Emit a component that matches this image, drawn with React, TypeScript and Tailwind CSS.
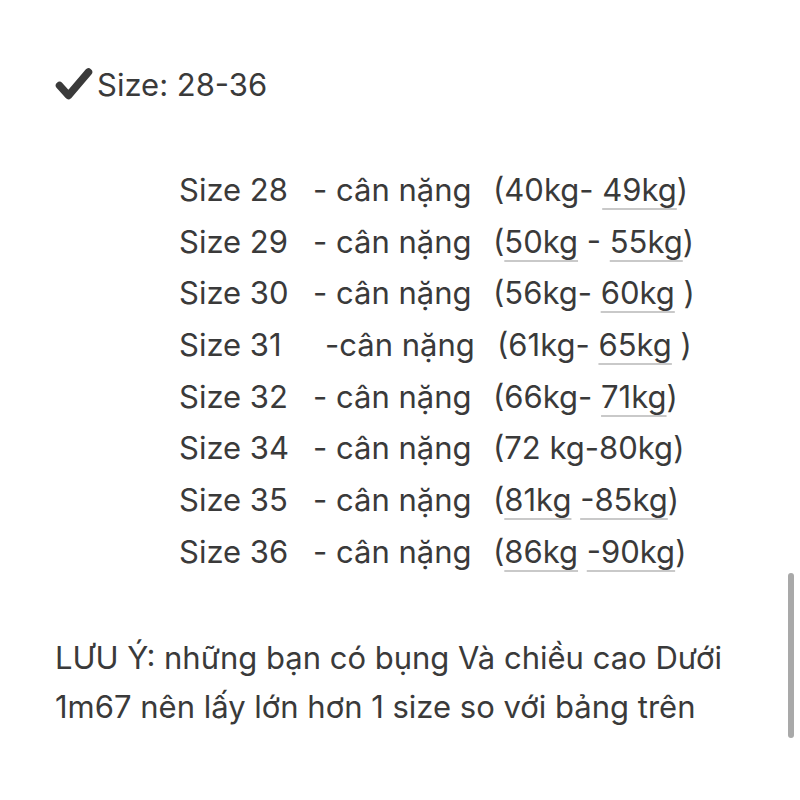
import React from 'react';

const rows: { size: string; dash: string; range: React.ReactNode; shift?: boolean }[] = [
  { size: 'Size 28', dash: '- cân nặng', range: <>(40kg- <U>49kg</U>)</> },
  { size: 'Size 29', dash: '- cân nặng', range: <>(<U>50kg</U> - <U>55kg</U>)</> },
  { size: 'Size 30', dash: '- cân nặng', range: <>(56kg- <U>60kg</U> )</> },
  { size: 'Size 31', dash: '-cân nặng', range: <>(61kg- <U>65kg</U> )</>, shift: true },
  { size: 'Size 32', dash: '- cân nặng', range: <>(66kg- <U>71kg</U>)</> },
  { size: 'Size 34', dash: '- cân nặng', range: <>(72 kg-80kg)</> },
  { size: 'Size 35', dash: '- cân nặng', range: <>(<U>81kg</U> <U>-85kg</U>)</> },
  { size: 'Size 36', dash: '- cân nặng', range: <>(<U>86kg</U> <U>-90kg</U>)</> },
];

function U({ children }: { children: React.ReactNode }) {
  return (
    <span className="underline decoration-[#c9c9c9] decoration-2 underline-offset-[7px]">{children}</span>
  );
}

export default function App() {
  return (
    <div className="w-[800px] h-[800px] bg-white text-[#3a3a3a] relative overflow-hidden" style={{ fontFamily: 'Inter, "Noto Sans", sans-serif' }}>
      <div className="pl-[55px] pt-[59px]">
        <div className="flex items-center h-[52px] text-[31px] gap-[4px]">
          <svg width="38" height="32" viewBox="0 0 38 32" className="mt-[-2px]">
            <path d="M4.5 17.5 L13.5 27.5 L33.5 4" fill="none" stroke="#3a3a3a" strokeWidth="7.5" strokeLinecap="round" strokeLinejoin="round" />
          </svg>
          <span>Size: 28-36</span>
        </div>

        <div className="mt-[53px] pl-[124px] text-[31px]">
          {rows.map((r) => (
            <div key={r.size} className="grid grid-cols-[134px_180px_1fr] h-[51.7px] leading-[51.7px] whitespace-nowrap">
              <span>{r.size}</span>
              <span className={r.shift ? 'pl-[12px]' : ''}>{r.dash}</span>
              <span className={r.shift ? 'pl-[4px]' : ''}>{r.range}</span>
            </div>
          ))}
        </div>

        <div className="mt-[55px] text-[31px] leading-[49px] whitespace-nowrap">
          <p>LƯU Ý: những bạn có bụng Và chiều cao Dưới</p>
          <p>1m67 nên lấy lớn hơn 1 size so với bảng trên</p>
        </div>
      </div>

      <div className="absolute left-[788px] top-[573px] w-[6px] h-[165px] rounded-full bg-[#a9a9a9]" />
    </div>
  );
}
